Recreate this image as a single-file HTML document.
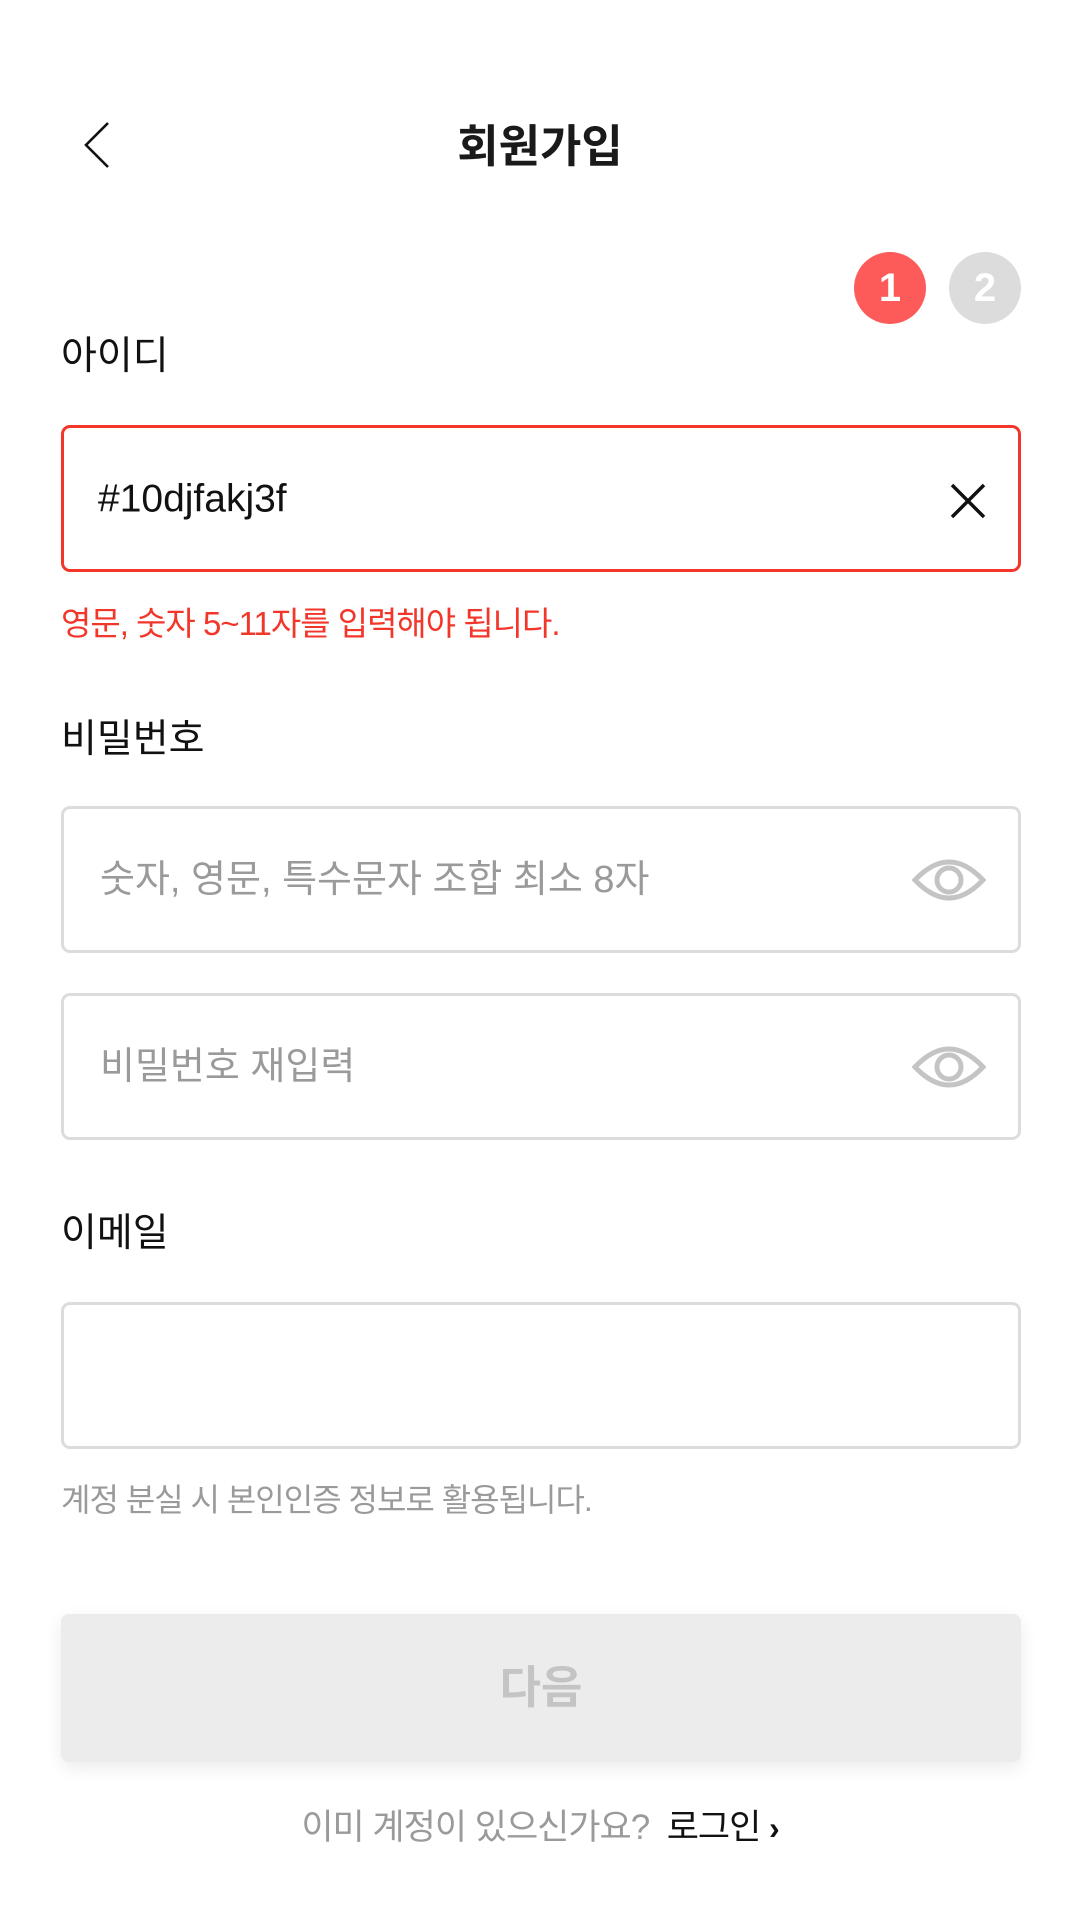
<!DOCTYPE html>
<html><head><meta charset="utf-8"><style>
*{margin:0;padding:0;box-sizing:border-box}
body{width:1080px;height:1920px;background:#fff;position:relative;overflow:hidden;font-family:"Liberation Sans","Noto Sans CJK KR",sans-serif;color:#111}
.a{position:absolute}
.lbl{position:absolute;left:61px;font-size:39px;line-height:1;color:#111}
.inp{position:absolute;left:61px;width:960px;height:147px;border:3px solid #dcdcdc;border-radius:9px}
.ph{position:absolute;left:36px;top:50%;transform:translateY(-50%);font-size:38px;color:#9a9a9a;line-height:1}
.eye{position:absolute;left:848px;top:50%;transform:translateY(-50%)}
</style></head><body>
<svg class="a" style="left:80px;top:120px" width="34" height="50" viewBox="0 0 34 50"><path d="M28 3 L6 25 L28 47" fill="none" stroke="#111" stroke-width="2.6"/></svg>
<div class="a" style="left:0;width:1080px;top:122px;text-align:center;font-size:45px;font-weight:bold;line-height:50px;color:#1a1a1a">회원가입</div>
<div class="a" style="left:854px;top:252px;width:72px;height:72px;border-radius:50%;background:#fd5a5a;color:#fff;font-weight:bold;font-size:40px;line-height:72px;text-align:center">1</div>
<div class="a" style="left:949px;top:252px;width:72px;height:72px;border-radius:50%;background:#dcdcdc;color:#fff;font-weight:bold;font-size:40px;line-height:72px;text-align:center">2</div>
<div class="lbl" style="top:337px">아이디</div>
<div class="inp" style="top:425px;border-color:#f3362a">
 <div class="ph" style="color:#111;left:34px;font-size:39px">#10djfakj3f</div>
 <svg class="a" style="left:885px;top:54px" width="38" height="38" viewBox="0 0 38 38"><path d="M3 3L35 35M35 3L3 35" stroke="#111" stroke-width="3.5"/></svg>
</div>
<div class="a" style="left:61px;top:605px;font-size:33px;color:#f3362a;letter-spacing:-1px;line-height:38px">영문, 숫자 5~11자를 입력해야 됩니다.</div>
<div class="lbl" style="top:720px">비밀번호</div>
<div class="inp" style="top:806px"><div class="ph">숫자, 영문, 특수문자 조합 최소 8자</div>
<svg class="eye" width="74" height="48" viewBox="0 0 74 48"><path d="M3 24 Q37 -12 71 24 Q37 60 3 24Z" fill="none" stroke="#c4c4c4" stroke-width="5"/><circle cx="37" cy="24" r="12" fill="none" stroke="#c4c4c4" stroke-width="5"/></svg></div>
<div class="inp" style="top:993px"><div class="ph">비밀번호 재입력</div>
<svg class="eye" width="74" height="48" viewBox="0 0 74 48"><path d="M3 24 Q37 -12 71 24 Q37 60 3 24Z" fill="none" stroke="#c4c4c4" stroke-width="5"/><circle cx="37" cy="24" r="12" fill="none" stroke="#c4c4c4" stroke-width="5"/></svg></div>
<div class="lbl" style="top:1214px">이메일</div>
<div class="inp" style="top:1302px"></div>
<div class="a" style="left:61px;top:1482px;font-size:32px;color:#9a9a9a;letter-spacing:-1px;line-height:36px">계정 분실 시 본인인증 정보로 활용됩니다.</div>
<div class="a" style="left:61px;top:1614px;width:960px;height:148px;background:#ececec;border-radius:8px;box-shadow:0 6px 18px rgba(0,0,0,0.08);text-align:center;line-height:148px;font-size:45px;font-weight:bold;color:#c4c4c4">다음</div>
<div class="a" style="left:0;width:1080px;top:1808px;text-align:center;font-size:35px;line-height:40px;color:#9a9a9a;letter-spacing:-1px">이미 계정이 있으신가요?&nbsp; <span style="color:#111">로그인</span> <span style="color:#111;font-size:32px;font-weight:bold">›</span></div>
</body></html>
